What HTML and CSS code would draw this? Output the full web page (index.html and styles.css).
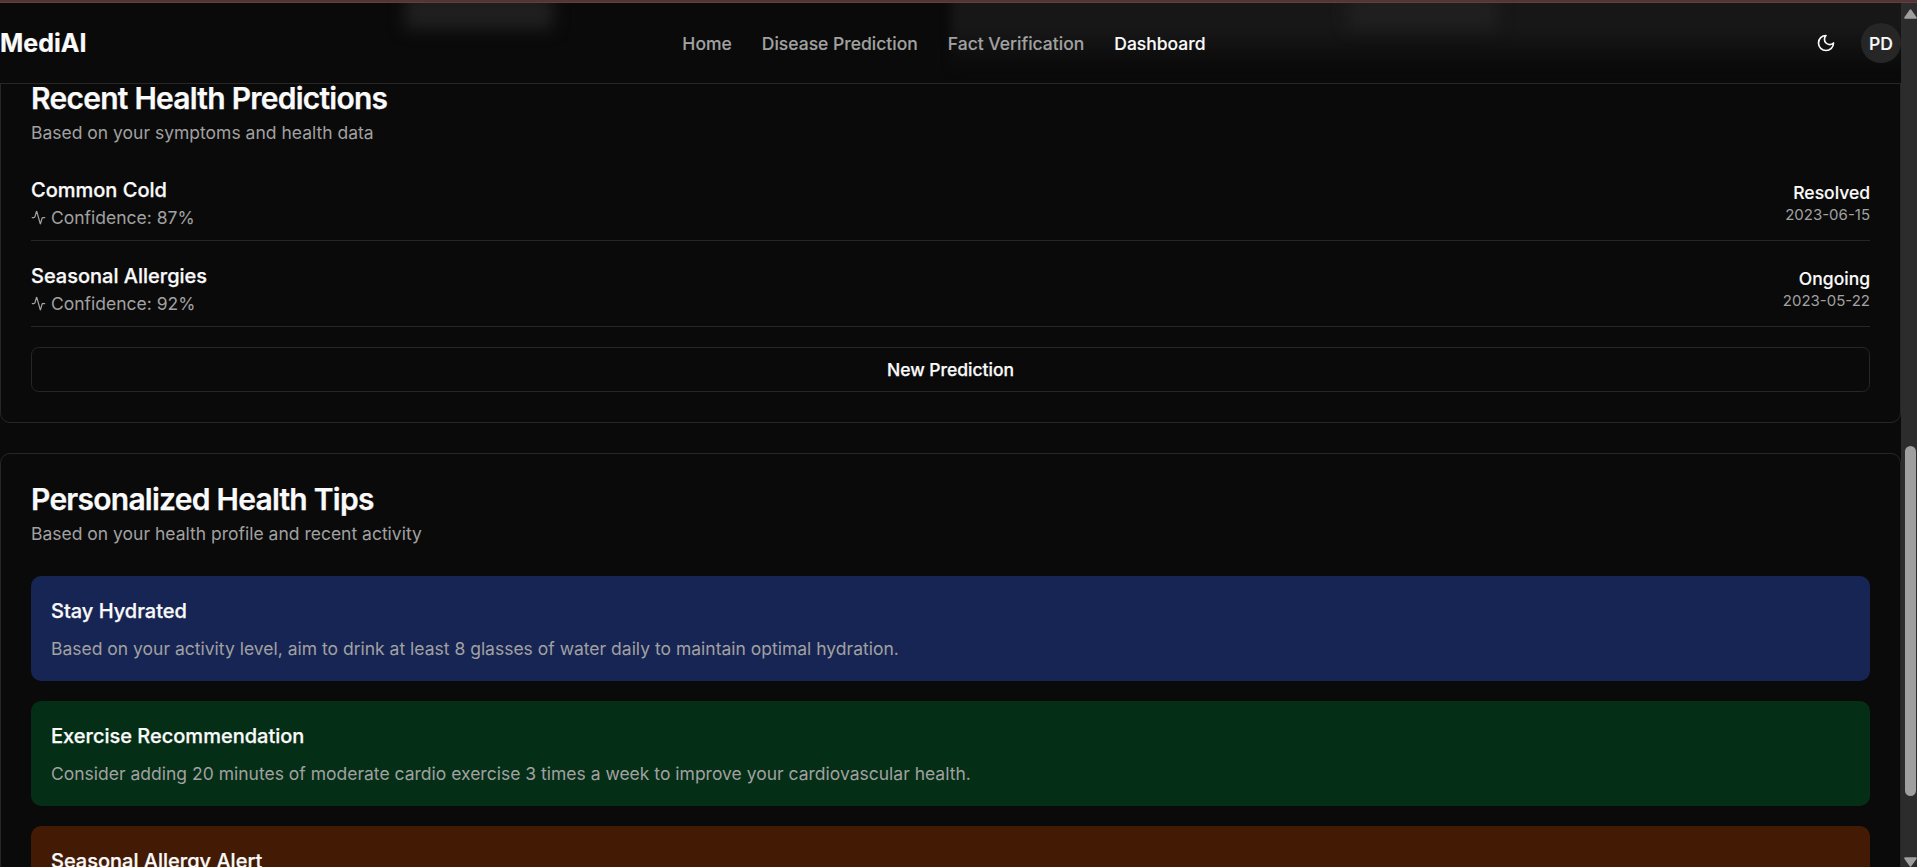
FILE: index.html
```html
<!DOCTYPE html>
<html lang="en">
<head>
<meta charset="utf-8">
<title>MediAI Dashboard</title>
<link rel="stylesheet" href="styles.css">
</head>
<body>
<div class="window-edge"></div>
<div class="viewport">
  <div class="page">
    <header class="header">
      <div class="backdrop" aria-hidden="true">
        <span class="panel"></span>
        <span class="blob blob-left"></span>
        <span class="blob blob-right"></span>
      </div>
      <a class="logo">MediAI</a>
      <nav class="nav">
        <a>Home</a>
        <a>Disease Prediction</a>
        <a>Fact Verification</a>
        <a class="active">Dashboard</a>
      </nav>
      <div class="actions">
        <button class="theme" aria-label="Toggle theme">
          <svg viewBox="0 0 24 24"><path d="M12 3a6 6 0 0 0 9 9 9 9 0 1 1-9-9Z"/></svg>
        </button>
        <span class="avatar">PD</span>
      </div>
    </header>
    <main class="content">
      <section class="card scrolled">
        <h2>Recent Health Predictions</h2>
        <p class="subtitle">Based on your symptoms and health data</p>
        <div class="stack">
          <div class="row">
            <div>
              <h3>Common Cold</h3>
              <p class="confidence"><svg viewBox="0 0 24 24"><path d="M22 12h-2.48a2 2 0 0 0-1.93 1.46l-2.35 8.36a.25.25 0 0 1-.48 0L9.24 2.18a.25.25 0 0 0-.48 0l-2.35 8.36A2 2 0 0 1 4.49 12H2"/></svg>Confidence: 87%</p>
            </div>
            <div class="status"><p>Resolved</p><p class="date">2023-06-15</p></div>
          </div>
          <div class="row">
            <div>
              <h3>Seasonal Allergies</h3>
              <p class="confidence"><svg viewBox="0 0 24 24"><path d="M22 12h-2.48a2 2 0 0 0-1.93 1.46l-2.35 8.36a.25.25 0 0 1-.48 0L9.24 2.18a.25.25 0 0 0-.48 0l-2.35 8.36A2 2 0 0 1 4.49 12H2"/></svg>Confidence: 92%</p>
            </div>
            <div class="status"><p>Ongoing</p><p class="date">2023-05-22</p></div>
          </div>
          <button class="outline">New Prediction</button>
        </div>
      </section>
      <section class="card">
        <h2>Personalized Health Tips</h2>
        <p class="subtitle">Based on your health profile and recent activity</p>
        <div class="stack">
          <article class="tip blue">
            <h3>Stay Hydrated</h3>
            <p>Based on your activity level, aim to drink at least 8 glasses of water daily to maintain optimal hydration.</p>
          </article>
          <article class="tip green">
            <h3>Exercise Recommendation</h3>
            <p>Consider adding 20 minutes of moderate cardio exercise 3 times a week to improve your cardiovascular health.</p>
          </article>
          <article class="tip orange">
            <h3>Seasonal Allergy Alert</h3>
          </article>
        </div>
      </section>
    </main>
  </div>
  <div class="scrollbar" aria-hidden="true">
    <svg class="arrow" viewBox="0 0 13 10"><path d="M6.5 1.2 11.8 8.8H1.2Z"/></svg>
    <span class="thumb"></span>
    <svg class="arrow" viewBox="0 0 13 10"><path d="M6.5 8.8 11.8 1.2H1.2Z"/></svg>
  </div>
</div>
</body>
</html>
```
FILE: styles.css
```css
* { box-sizing: border-box; margin: 0; padding: 0; }

html { height: 867px; overflow: hidden; background: #0a0a0a; }

body {
  height: 867px;
  overflow: hidden;
  display: flex;
  flex-direction: column;
  background: #0a0a0a;
  color: #fafafa;
  font-family: Inter, "Liberation Sans", sans-serif;
  font-size: 17.5px;
  line-height: 25px;
}

button { font: inherit; color: inherit; background: none; border: 0; }

.window-edge {
  flex: none;
  height: 3px;
  background: #583333;
  border-bottom: 1px solid #5a4443;
}

.viewport { flex: 1; min-height: 0; display: flex; }
.page { flex: 1; min-width: 0; display: flex; flex-direction: column; }

.header {
  position: relative;
  flex: none;
  height: 81px;
  display: flex;
  align-items: center;
  justify-content: space-between;
  border-bottom: 1px solid #262626;
}
.header > * { position: relative; }
.header > .backdrop {
  position: absolute;
  inset: 0;
  overflow: hidden;
}
.panel {
  position: absolute;
  left: 951px;
  right: -40px;
  top: -60px;
  height: 126px;
  background: linear-gradient(#171717 68%, #101010 84%, #0a0a0a);
  filter: blur(5px);
}
.blob {
  position: absolute;
  top: -8px;
  width: 148px;
  height: 34px;
  background: #202020;
  filter: blur(8px);
}
.blob-left { left: 405px; }
.blob-right { left: 1348px; }

.logo { font-size: 25px; line-height: 35px; font-weight: 700; -webkit-text-stroke: 0.2px; }
.nav { left: -1px; display: flex; gap: 30px; font-weight: 500; color: #a1a1a1; }
.nav .active { color: #fafafa; }
.nav, .status { -webkit-text-stroke: 0.12px; }
.outline, h2, h3 { -webkit-text-stroke: 0.25px; }
.actions { display: flex; align-items: center; gap: 12.5px; }
.theme { width: 45px; height: 45px; display: grid; place-items: center; }
.theme svg { width: 20px; height: 20px; }
.avatar {
  width: 40px;
  height: 40px;
  display: grid;
  place-items: center;
  border-radius: 50%;
  background: #262626;
  font-weight: 500;
  -webkit-text-stroke: 0.2px;
}
svg { fill: none; stroke: currentColor; stroke-width: 2; stroke-linecap: round; stroke-linejoin: round; }

.content {
  flex: 1;
  min-height: 0;
  overflow: hidden;
  display: flex;
  flex-direction: column;
  gap: 30px;
}
.card {
  flex: none;
  padding: 30px;
  border: 1px solid #262626;
  border-radius: 10px;
}
.scrolled { margin-top: -32.6px; padding-top: 30.7px; }
.scrolled .subtitle { margin-top: 6.8px; }
h2 { font-size: 30px; line-height: 30px; font-weight: 600; letter-spacing: -0.75px; }
.subtitle { margin-top: 7.5px; color: #a1a1a1; }
h3 { font-size: 20px; line-height: 30px; font-weight: 500; }

.stack { display: flex; flex-direction: column; gap: 20px; margin-top: 30px; }
.row {
  display: flex;
  align-items: center;
  justify-content: space-between;
  padding-bottom: 10px;
  border-bottom: 1px solid #262626;
}
.confidence { display: flex; align-items: center; gap: 5px; color: #a1a1a1; }
.confidence svg { width: 15px; height: 15px; }
.status { text-align: right; font-weight: 500; }
.date { font-size: 15px; line-height: 20px; font-weight: 400; color: #a1a1a1; -webkit-text-stroke: 0; }
.outline { height: 45px; border: 1px solid #262626; border-radius: 7.5px; font-weight: 500; }

.tip { height: 105px; padding: 20px; border-radius: 10px; }
.tip p { margin-top: 10px; color: #a1a1a1; }
.blue { background: #172554; }
.green { background: #052e16; }
.orange { background: #431a03; }

.scrollbar {
  flex: none;
  width: 16px;
  display: flex;
  flex-direction: column;
  align-items: flex-end;
  padding-top: 6px;
  background: #2c2c2c;
}
.arrow { flex: none; width: 13px; height: 10px; fill: #9f9f9f; stroke: #9f9f9f; }
.thumb { flex: none; width: 11px; height: 350px; margin: 427px 1px 61px 0; border-radius: 6px; background: #9f9f9f; }
```
